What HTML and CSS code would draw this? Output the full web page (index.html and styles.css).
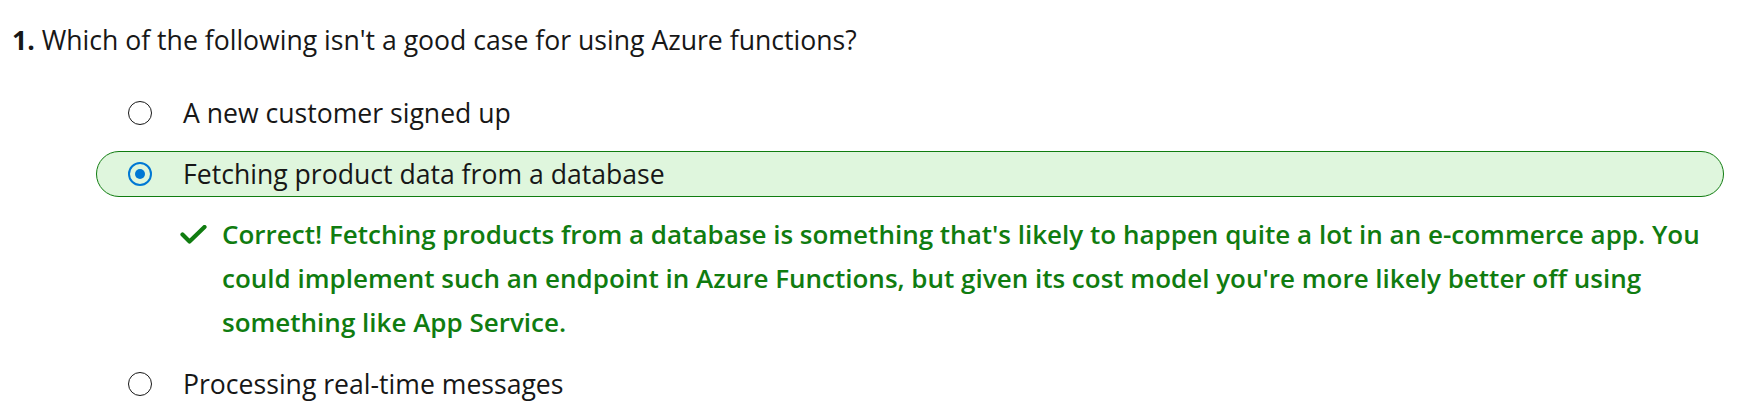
FILE: index.html
```html
<!DOCTYPE html>
<html lang="en">
<head>
    <meta charset="UTF-8">
    <meta name="viewport" content="width=device-width, initial-scale=1.0">
    <title>Knowledge check</title>
    <link rel="stylesheet" href="styles.css">
</head>
<body>
    <div class="question">
        <p class="question-title"><strong>1.</strong> Which of the following isn't a good case for using Azure functions?</p>

        <ul class="choices">
            <li class="choice">
                <span class="radio"></span>
                <span class="choice-text">A new customer signed up</span>
            </li>
            <li class="choice choice-correct">
                <span class="radio radio-checked"></span>
                <span class="choice-text">Fetching product data from a database</span>
            </li>
            <li class="feedback">
                <svg class="check" width="27" height="19" viewBox="0 0 27 19">
                    <polyline points="2.5,9.5 9.5,16.5 24.5,2" fill="none" stroke="#107c10" stroke-width="4.2" stroke-linecap="round" stroke-linejoin="round"/>
                </svg>
                <p class="feedback-text">Correct! Fetching products from a database is something that's likely to happen quite a lot in an e-commerce app. You could implement such an endpoint in Azure Functions, but given its cost model you're more likely better off using something like App Service.</p>
            </li>
            <li class="choice">
                <span class="radio"></span>
                <span class="choice-text">Processing real-time messages</span>
            </li>
        </ul>
    </div>
</body>
</html>
```

FILE: styles.css
```css
body {
    font-family: "Open Sans", "Noto Sans", sans-serif;
    font-size: 26.6px;
    color: #171717;
    background-color: #fff;
    margin: 0;
    padding: 0;
}
.question {
    padding: 22px 0 0 12px;
}
.question-title {
    margin: 0;
    line-height: 36px;
}
.question-title strong {
    font-weight: 700;
}
.choices {
    list-style: none;
    margin: 32px 0 0 0;
    padding: 0;
}
.choice {
    display: flex;
    align-items: center;
    height: 46px;
    box-sizing: border-box;
    margin: 0 30px 15px 84px;
    padding-left: 31px;
    border: 1px solid transparent;
    border-radius: 23px;
}
.choice-correct {
    background-color: #dff6dd;
    border-color: #107c10;
}
.radio {
    width: 24px;
    height: 24px;
    box-sizing: border-box;
    border: 1.5px solid #171717;
    border-radius: 50%;
    margin-right: 31px;
    flex-shrink: 0;
    display: flex;
    align-items: center;
    justify-content: center;
}
.radio-checked {
    border: 2px solid #0078d4;
}
.radio-checked::after {
    content: "";
    width: 10px;
    height: 10px;
    border-radius: 50%;
    background-color: #0078d4;
}
.choice-text {
    line-height: 1;
}
.feedback {
    display: flex;
    align-items: flex-start;
    margin: 0 30px 17px 168px;
}
.check {
    flex-shrink: 0;
    margin: 13px 15px 0 0;
}
.feedback-text {
    margin: 0;
    color: #107c10;
    font-size: 26px;
    font-weight: 600;
    line-height: 44px;
}
```
